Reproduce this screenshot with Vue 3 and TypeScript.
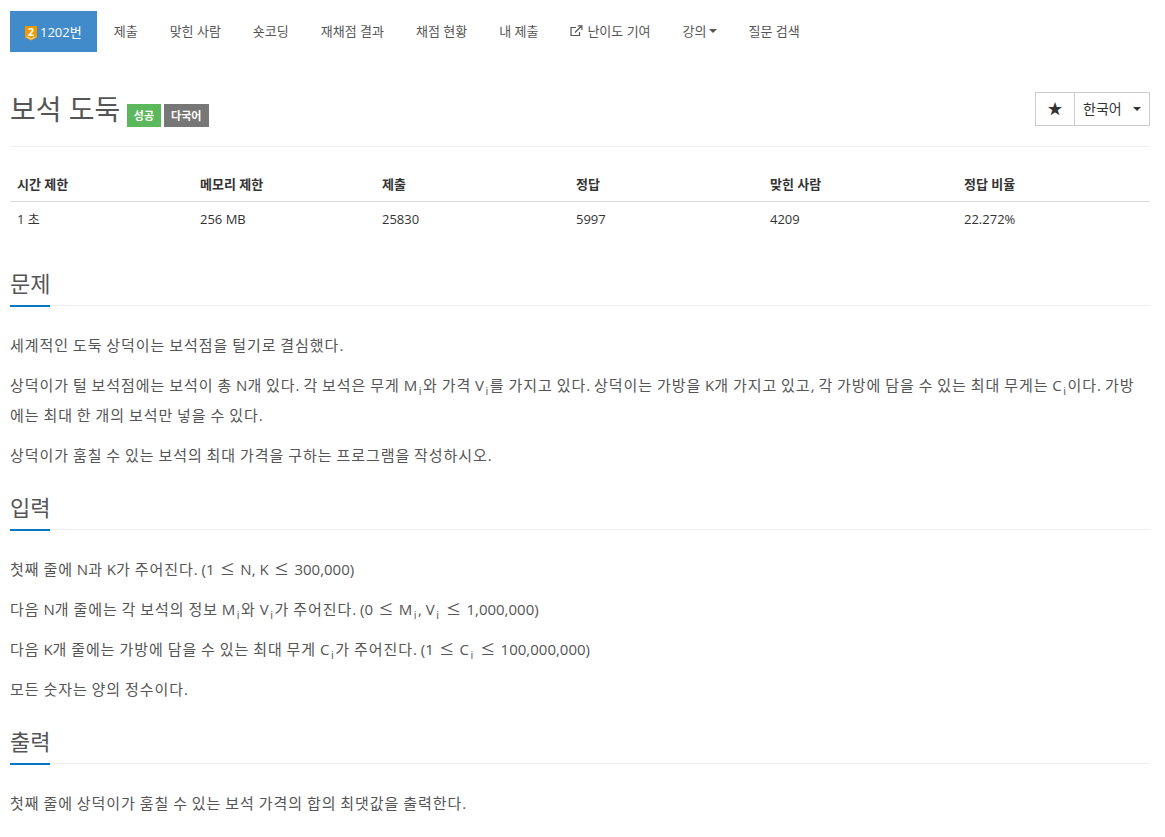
<script setup lang="ts">
type Seg = { t: string; c: string }

function segs(text: string): Seg[] {
  const out: Seg[] = []
  const re = /(_i)|(\|)|([\uac00-\ud7a3]+)|(≤)|([^\uac00-\ud7a3_≤|]+)/g
  let m: RegExpExecArray | null
  while ((m = re.exec(text))) {
    if (m[1]) out.push({ t: 'i', c: 'sub' })
    else if (m[2]) out.push({ t: '', c: 'br' })
    else if (m[3]) out.push({ t: m[3], c: 'ko' })
    else if (m[4]) out.push({ t: m[4], c: 'sym' })
    else out.push({ t: m[5], c: 'lat' })
  }
  return out
}

const nav: string[] = ['제출', '맞힌 사람', '숏코딩', '재채점 결과', '채점 현황', '내 제출']
const headers: string[] = ['시간 제한', '메모리 제한', '제출', '정답', '맞힌 사람', '정답 비율']
const values: string[] = ['1 초', '256 MB', '25830', '5997', '4209', '22.272%']
const widths: number[] = [183, 182, 194, 194, 194, 193]

const sections: { title: string; paras: string[] }[] = [
  {
    title: '문제',
    paras: [
      '세계적인 도둑 상덕이는 보석점을 털기로 결심했다.',
      '상덕이가 털 보석점에는 보석이 총 N개 있다. 각 보석은 무게 M_i와 가격 V_i를 가지고 있다. 상덕이는 가방을 K개 가지고 있고, 각 가방에 담을 수 있는 최대 무게는 C_i이다. 가방|에는 최대 한 개의 보석만 넣을 수 있다.',
      '상덕이가 훔칠 수 있는 보석의 최대 가격을 구하는 프로그램을 작성하시오.',
    ],
  },
  {
    title: '입력',
    paras: [
      '첫째 줄에 N과 K가 주어진다. (1 ≤ N, K ≤ 300,000)',
      '다음 N개 줄에는 각 보석의 정보 M_i와 V_i가 주어진다. (0 ≤ M_i, V_i ≤ 1,000,000)',
      '다음 K개 줄에는 가방에 담을 수 있는 최대 무게 C_i가 주어진다. (1 ≤ C_i ≤ 100,000,000)',
      '모든 숫자는 양의 정수이다.',
    ],
  },
  {
    title: '출력',
    paras: ['첫째 줄에 상덕이가 훔칠 수 있는 보석 가격의 합의 최댓값을 출력한다.'],
  },
]
</script>

<template>
  <div class="page">
    <nav class="nav">
      <a class="item active">
        <svg class="tier" width="12" height="18" viewBox="0 -3 12 18">
          <path d="M0 0H12V11.500L6 14.500L0 11.500Z" fill="#ec9a00" />
          <path d="M1.500 10.800L6 13L10.500 10.800" fill="none" stroke="#fff" stroke-width="0.800" />
          <text x="6" y="9.500" text-anchor="middle" class="tier-num">2</text>
        </svg>
        <span>1202번</span>
      </a>
      <a v-for="n in nav" :key="n" class="item">{{ n }}</a>
      <a class="item">
        <svg class="ext" width="13" height="12" viewBox="0 0 13 12" fill="none" stroke="#555" stroke-width="1.200">
          <path d="M9.500 7V10.500H1V2.500H6" />
          <path d="M5 7.500L11.500 1M7.800 0.900H11.900V5" />
        </svg>
        난이도 기여
      </a>
      <a class="item">강의<i class="caret"></i></a>
      <a class="item">질문 검색</a>
    </nav>

    <header class="title-row">
      <h1 class="title">보석 도둑</h1>
      <span class="label green">성공</span>
      <span class="label gray">다국어</span>
      <div class="btns">
        <button class="btn star"><span class="star-glyph">★</span></button>
        <button class="btn lang"><span class="lang-text">한국어</span><i class="caret dark"></i></button>
      </div>
    </header>

    <div class="table">
      <div class="row head">
        <div v-for="(h, i) in headers" :key="h" class="cell" :style="{ width: widths[i] + 'px' }">{{ h }}</div>
      </div>
      <div class="row">
        <div v-for="(v, i) in values" :key="v" class="cell" :style="{ width: widths[i] + 'px' }">{{ v }}</div>
      </div>
    </div>

    <section v-for="s in sections" :key="s.title" class="sec">
      <div class="headline"><h2>{{ s.title }}</h2></div>
      <p v-for="(para, i) in s.paras" :key="i">
        <template v-for="(g, j) in segs(para)" :key="j">
          <sub v-if="g.c === 'sub'">{{ g.t }}</sub>
          <br v-else-if="g.c === 'br'" />
          <span v-else :class="g.c">{{ g.t }}</span>
        </template>
      </p>
    </section>
  </div>
</template>

<style>
html, body { background: #fff; }
</style>

<style scoped>
.page {
  box-sizing: border-box;
  width: 1165px;
  height: 837px;
  overflow: hidden;
  padding: 11px 15px 0 10px;
  font-family: "Open Sans", "Noto Sans CJK KR", sans-serif;
  color: #555;
  font-size: 14px;
  line-height: 20px;
}
.nav { display: flex; height: 41px; }
.item {
  display: flex;
  align-items: center;
  box-sizing: border-box;
  height: 41px;
  padding: 0 16px 1px;
  font-size: 13px;
  color: #555;
}
.item.active { background: #428bca; color: #fff; padding: 0 15px; margin-right: 1px; }
.tier { margin-right: 3px; }
.tier-num { font: 700 11px "Open Sans", sans-serif; fill: #fff; }
.ext { margin-right: 4px; }
.caret {
  display: inline-block;
  margin-left: 2px;
  border-top: 4px solid #555;
  border-left: 4px solid transparent;
  border-right: 4px solid transparent;
}
.caret.dark { border-top-color: #333; margin-left: 11px; }
.title-row {
  display: flex;
  align-items: flex-start;
  margin-top: 33px;
  height: 61px;
  border-bottom: 1px solid #eee;
}
.title {
  margin: 0;
  font-size: 28px;
  line-height: 48px;
  font-weight: 400;
  color: #555;
}
.label {
  margin-top: 19px;
  height: 23px;
  line-height: 23px;
  font-size: 11px;
  font-weight: 700;
  color: #fff;
}
.green { background: #5cb85c; margin-left: 7px; padding: 0 6.500px; }
.gray { background: #777; margin-left: 3px; padding: 0 7.500px; }
.btns { display: flex; margin-left: auto; margin-top: 7px; height: 34px; }
.btn {
  box-sizing: border-box;
  height: 34px;
  background: #fff;
  border: 1px solid #ccc;
  color: #333;
  font-family: inherit;
  font-size: 14px;
  padding: 0;
  display: flex;
  align-items: center;
}
.star { width: 40px; justify-content: center; font-size: 15px; }
.star-glyph { position: relative; top: -2px; }
.lang { width: 76px; margin-left: -1px; padding-left: 8px; }
.lang-text { position: relative; top: -1px; }
.table { margin-top: 20px; }
.row { display: flex; height: 34px; align-items: center; font-size: 13px; color: #333; }
.head { height: 35px; font-weight: 700; border-bottom: 1px solid #ddd; box-sizing: border-box; }
.cell { padding-left: 7px; box-sizing: border-box; }
.sec { padding-top: 10px; }
.sec:first-of-type { padding-top: 30px; }
.headline {
  border-bottom: 1px solid #eee;
  height: 39px;
  margin-bottom: 24px;
}
.headline h2 {
  margin: 0;
  box-sizing: border-box;
  width: 40px;
  height: 41px;
  line-height: 34px;
  font-size: 22px;
  font-weight: 400;
  white-space: nowrap;
  color: #555;
  border-bottom: 2px solid #0076c0;
}
p {
  margin: 0 0 10px;
  font-size: 15px;
  line-height: 30px;
}
.ko { font-size: 15px; letter-spacing: 0.950px; line-height: 1; }
.lat { line-height: 1; }
.sym { font-family: "Noto Sans CJK KR", sans-serif; line-height: 1; padding: 0 1.500px; }
sub { font-size: 11px; line-height: 0; color: #555; padding: 0 1.500px; }
</style>
